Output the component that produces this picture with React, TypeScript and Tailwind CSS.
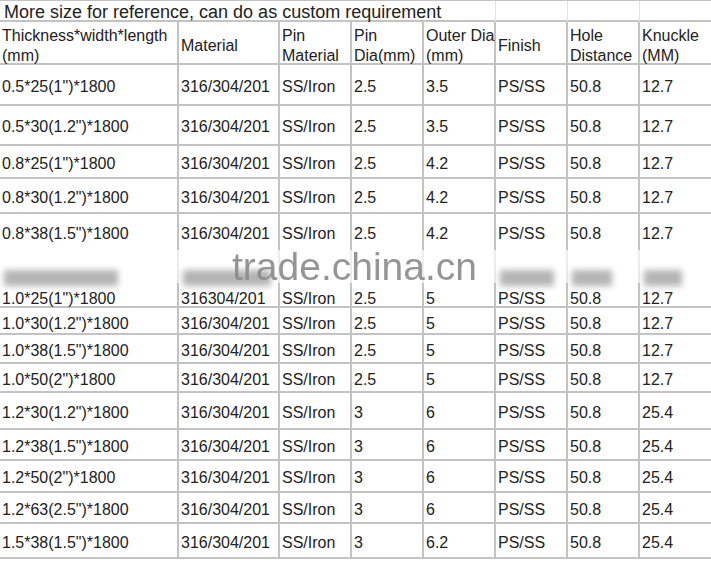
import React from 'react';

interface Row {
  size: string;
  material: string;
  pinDia: string;
  outerDia: string;
  knuckle: string;
  h: string;
  noBorder?: boolean;
}

const rows: Row[] = [
  { size: '0.5*25(1")*1800', material: '316/304/201', pinDia: '2.5', outerDia: '3.5', knuckle: '12.7', h: 'h-[41px]' },
  { size: '0.5*30(1.2")*1800', material: '316/304/201', pinDia: '2.5', outerDia: '3.5', knuckle: '12.7', h: 'h-[40px]' },
  { size: '0.8*25(1")*1800', material: '316/304/201', pinDia: '2.5', outerDia: '4.2', knuckle: '12.7', h: 'h-[33px]' },
  { size: '0.8*30(1.2")*1800', material: '316/304/201', pinDia: '2.5', outerDia: '4.2', knuckle: '12.7', h: 'h-[35px]' },
  { size: '0.8*38(1.5")*1800', material: '316/304/201', pinDia: '2.5', outerDia: '4.2', knuckle: '12.7', h: 'h-[36px]', noBorder: true },
];

const rowsAfter: Row[] = [
  { size: '1.0*25(1")*1800', material: '316304/201', pinDia: '2.5', outerDia: '5', knuckle: '12.7', h: 'h-[25px]' },
  { size: '1.0*30(1.2")*1800', material: '316/304/201', pinDia: '2.5', outerDia: '5', knuckle: '12.7', h: 'h-[27px]' },
  { size: '1.0*38(1.5")*1800', material: '316/304/201', pinDia: '2.5', outerDia: '5', knuckle: '12.7', h: 'h-[29px]' },
  { size: '1.0*50(2")*1800', material: '316/304/201', pinDia: '2.5', outerDia: '5', knuckle: '12.7', h: 'h-[29px]' },
  { size: '1.2*30(1.2")*1800', material: '316/304/201', pinDia: '3', outerDia: '6', knuckle: '25.4', h: 'h-[37px]' },
  { size: '1.2*38(1.5")*1800', material: '316/304/201', pinDia: '3', outerDia: '6', knuckle: '25.4', h: 'h-[31px]' },
  { size: '1.2*50(2")*1800', material: '316/304/201', pinDia: '3', outerDia: '6', knuckle: '25.4', h: 'h-[32px]' },
  { size: '1.2*63(2.5")*1800', material: '316/304/201', pinDia: '3', outerDia: '6', knuckle: '25.4', h: 'h-[31px]' },
  { size: '1.5*38(1.5")*1800', material: '316/304/201', pinDia: '3', outerDia: '6.2', knuckle: '25.4', h: 'h-[35px]' },
];

const cols = 'grid grid-cols-[179px_101px_72px_72px_72px_72px_72px_71px]';
const cell = 'flex items-center border-r-2 border-[#c3c3c3] pl-[2px] pt-1 whitespace-nowrap';
const lastCell = 'flex items-center pl-[2px] pt-1 whitespace-nowrap';

const DataRow = ({ r }: { r: Row }) => (
  <div className={`${cols} ${r.h} ${r.noBorder ? '' : 'border-b-2 border-[#c3c3c3]'}`}>
    <div className={`${cell} pl-1`}>{r.size}</div>
    <div className={cell}>{r.material}</div>
    <div className={cell}>SS/Iron</div>
    <div className={cell}>{r.pinDia}</div>
    <div className={cell}>{r.outerDia}</div>
    <div className={cell}>PS/SS</div>
    <div className={cell}>50.8</div>
    <div className={lastCell}>{r.knuckle}</div>
  </div>
);

// blurred leftovers of a cut-out row
const smudges = [
  { col: 'w-[114px]', show: true },
  { col: 'w-[88px]', show: true },
  { col: '', show: false },
  { col: '', show: false },
  { col: '', show: false },
  { col: 'w-[54px]', show: true },
  { col: 'w-[40px]', show: true },
  { col: 'w-[38px]', show: true },
];

export default function App() {
  return (
    <div
      className="w-[711px] h-[562px] overflow-hidden bg-white text-[16px] text-[#222]"
      style={{ fontFamily: '"Liberation Sans", Arial, sans-serif' }}
    >
      {/* title */}
      <div className={`${cols} h-[22px] border-t border-b-2 border-[#c3c3c3]`}>
        <div className="col-span-5 border-r border-[#e2e2e2] pl-1 text-[18px] leading-[22px] whitespace-nowrap">
          More size for reference, can do as custom requirement
        </div>
        <div className="border-r border-[#e2e2e2]" />
        <div className="border-r border-[#e2e2e2]" />
        <div />
      </div>

      {/* header */}
      <div className={`${cols} h-[43px] border-b-2 border-[#c3c3c3] leading-[20px]`}>
        <div className={`${cell} pl-1`}>Thickness*width*length<br />(mm)</div>
        <div className={cell}>Material</div>
        <div className={cell}>Pin<br />Material</div>
        <div className={cell}>Pin<br />Dia(mm)</div>
        <div className={cell}>Outer Dia<br />(mm)</div>
        <div className={cell}>Finish</div>
        <div className={cell}>Hole<br />Distance</div>
        <div className={lastCell}>Knuckle<br />(MM)</div>
      </div>

      {rows.map((r, i) => <DataRow key={i} r={r} />)}

      {/* cut band with watermark */}
      <div className="relative">
        <div className={`${cols} h-[33px]`}>
          {smudges.map((s, i) => (
            <div key={i} className={`${i < 7 ? 'border-r-2 border-[#ececec]' : ''} flex items-end pl-1`}>
              {s.show && <div className={`${s.col} h-[16px] mb-[-3px] bg-[#b4b4b4] blur-[3px]`} />}
            </div>
          ))}
        </div>
        <div className="absolute left-[232px] top-[-3px] text-[39px] leading-[40px] text-[#8a8a8a] opacity-90 whitespace-nowrap">
          trade.china.cn
        </div>
      </div>

      {rowsAfter.map((r, i) => <DataRow key={i} r={r} />)}
    </div>
  );
}
